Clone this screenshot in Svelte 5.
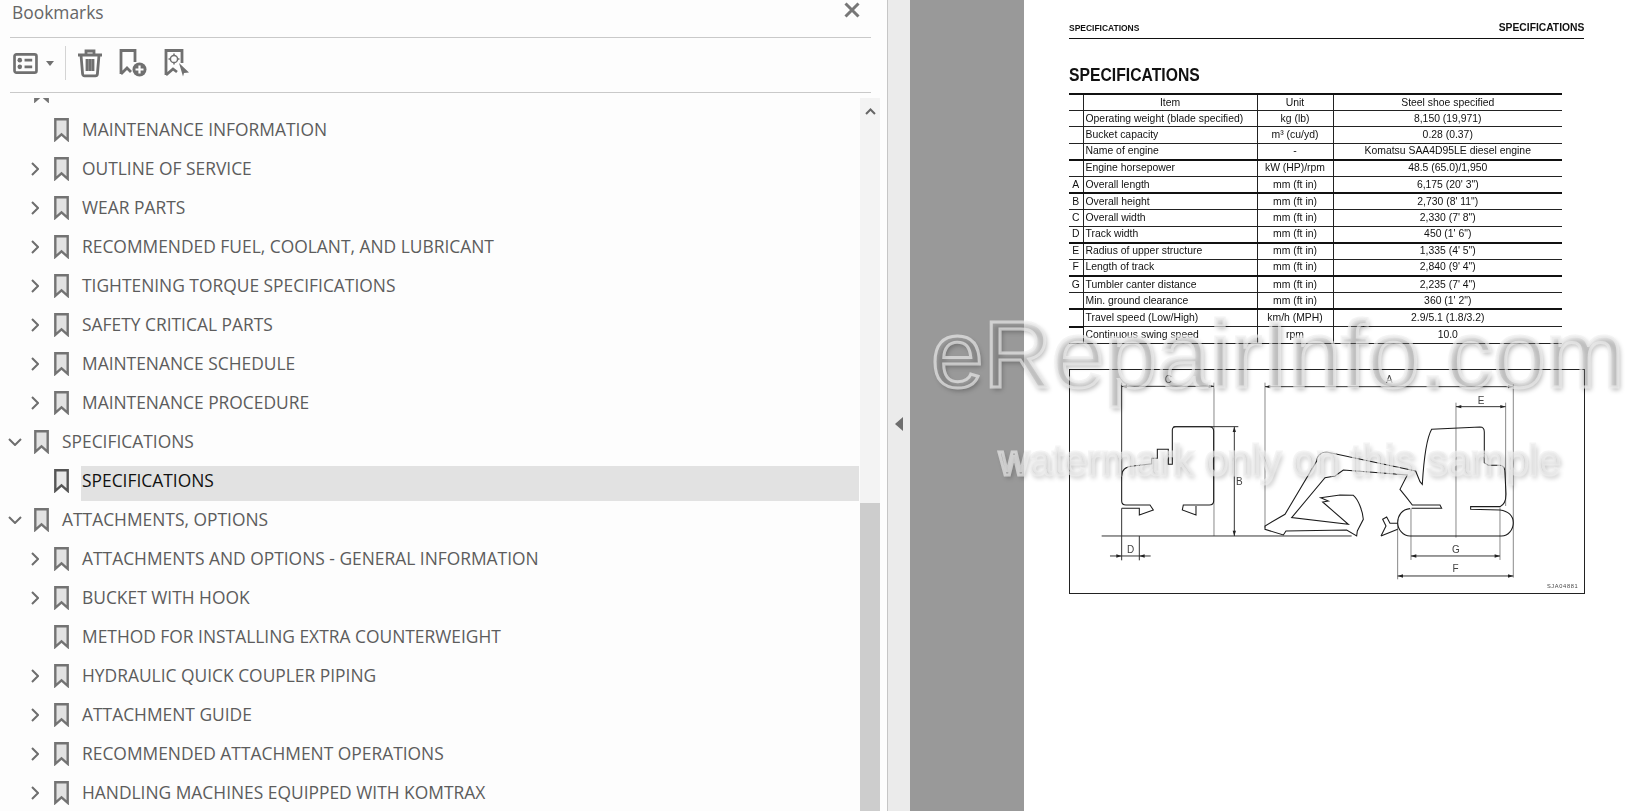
<script>
  // bookmark tree rows, level 0 = top, 1 = nested
  const rows = [
    { label: '', level: 0, hidden: true },
    { label: 'MAINTENANCE INFORMATION', level: 1 },
    { label: 'OUTLINE OF SERVICE', level: 1, arrow: 'right' },
    { label: 'WEAR PARTS', level: 1, arrow: 'right' },
    { label: 'RECOMMENDED FUEL, COOLANT, AND LUBRICANT', level: 1, arrow: 'right' },
    { label: 'TIGHTENING TORQUE SPECIFICATIONS', level: 1, arrow: 'right' },
    { label: 'SAFETY CRITICAL PARTS', level: 1, arrow: 'right' },
    { label: 'MAINTENANCE SCHEDULE', level: 1, arrow: 'right' },
    { label: 'MAINTENANCE PROCEDURE', level: 1, arrow: 'right' },
    { label: 'SPECIFICATIONS', level: 0, arrow: 'down' },
    { label: 'SPECIFICATIONS', level: 1, selected: true },
    { label: 'ATTACHMENTS, OPTIONS', level: 0, arrow: 'down' },
    { label: 'ATTACHMENTS AND OPTIONS - GENERAL INFORMATION', level: 1, arrow: 'right' },
    { label: 'BUCKET WITH HOOK', level: 1, arrow: 'right' },
    { label: 'METHOD FOR INSTALLING EXTRA COUNTERWEIGHT', level: 1 },
    { label: 'HYDRAULIC QUICK COUPLER PIPING', level: 1, arrow: 'right' },
    { label: 'ATTACHMENT GUIDE', level: 1, arrow: 'right' },
    { label: 'RECOMMENDED ATTACHMENT OPERATIONS', level: 1, arrow: 'right' },
    { label: 'HANDLING MACHINES EQUIPPED WITH KOMTRAX', level: 1, arrow: 'right' }
  ];

  const specs = [
    ['', 'Operating weight (blade specified)', 'kg (lb)', '8,150 (19,971)'],
    ['', 'Bucket capacity', 'm³ (cu/yd)', '0.28 (0.37)'],
    ['', 'Name of engine', '-', 'Komatsu SAA4D95LE diesel engine', true],
    ['', 'Engine horsepower', 'kW (HP)/rpm', '48.5 (65.0)/1,950'],
    ['A', 'Overall length', 'mm (ft in)', '6,175 (20\' 3")', true],
    ['B', 'Overall height', 'mm (ft in)', '2,730 (8\' 11")'],
    ['C', 'Overall width', 'mm (ft in)', '2,330 (7\' 8")'],
    ['D', 'Track width', 'mm (ft in)', '450 (1\' 6")', true],
    ['E', 'Radius of upper structure', 'mm (ft in)', '1,335 (4\' 5")'],
    ['F', 'Length of track', 'mm (ft in)', '2,840 (9\' 4")', true],
    ['G', 'Tumbler canter distance', 'mm (ft in)', '2,235 (7\' 4")'],
    ['', 'Min. ground clearance', 'mm (ft in)', '360 (1\' 2")', true],
    ['', 'Travel speed (Low/High)', 'km/h (MPH)', '2.9/5.1 (1.8/3.2)'],
    ['', 'Continuous swing speed', 'rpm', '10.0']
  ];
</script>

<div class="app">
  <aside class="panel">
    <header class="title">
      <span>Bookmarks</span>
      <svg class="close" viewBox="0 0 16 16"><path d="M1.5 1.5l13 13M14.5 1.5l-13 13" /></svg>
    </header>
    <div class="toolbar">
      <svg class="ic-list" viewBox="0 0 26 22">
        <rect x="1.5" y="1.5" width="23" height="19" rx="2" class="line" />
        <circle cx="7" cy="7.5" r="2.4" class="solid" />
        <circle cx="7" cy="14.5" r="2.4" class="solid" />
        <path d="M12 7.5h8M12 14.5h8" class="line" />
      </svg>
      <svg class="ic-caret" viewBox="0 0 8 5"><path d="M0 0h8L4 5z" class="solid" /></svg>
      <span class="divider"></span>
      <svg class="ic-trash" viewBox="0 0 26 28">
        <path d="M1 6h24M9 5V2h8v3M4 6l1.600 19a2 2 0 0 0 2 1.800h10.800a2 2 0 0 0 2-1.800L22 6M10 10v12M13 10v12M16 10v12" class="line" />
      </svg>
      <svg class="ic-add" viewBox="0 0 28 28">
        <path d="M2 25V1.500h14V13M2 25l6-6 4 4" class="line" />
        <circle cx="20.5" cy="20.5" r="7" class="solid" />
        <path d="M20.500 16.500v8M16.500 20.500h8" class="plus" />
      </svg>
      <svg class="ic-target" viewBox="0 0 26 28">
        <path d="M2 26V1.500h16V14M2 26l7-6 4 3" class="line" />
        <circle cx="10" cy="10" r="3.600" class="thin" />
        <path d="M10 4.500v2M10 13.500v2M4.500 10h2M13.500 10h2" class="thin" />
        <path d="M15 14l10 9.500-5 .5-1 3.500z" class="solid" />
      </svg>
    </div>

    <div class="tree">
      <ul class="rows">
        {#each rows as r}
          <li class="row" class:nested={r.level === 1} class:selected={r.selected}>
            <span class="arrow">
              {#if r.arrow === 'right'}
                <svg width="8" height="14" viewBox="0 0 8 14"><path d="M1 1l6 6-6 6" /></svg>
              {:else if r.arrow === 'down'}
                <svg width="14" height="8" viewBox="0 0 14 8"><path d="M1 1l6 6 6-6" /></svg>
              {/if}
            </span>
            <svg class="mark" viewBox="0 0 15 24"><path d="M1.300 1.300h12.400v20.500L7.500 16.300 1.300 21.800z" /></svg>
            {#if !r.hidden}<span class="label">{r.label}</span>{/if}
          </li>
        {/each}
      </ul>
      <div class="scrollbar">
        <svg class="up" width="11" height="7" viewBox="0 0 11 7"><path d="M1 6l4.500-4.500L10 6" /></svg>
        <div class="thumb"></div>
      </div>
    </div>
  </aside>

  <div class="strip">
    <svg width="8" height="14" viewBox="0 0 8 14"><path d="M8 0v14L0 7z" /></svg>
  </div>

  <main class="viewer">
    <div class="gutter"></div>
    <article class="page">
      <div class="page-head">
        <span class="h-left">SPECIFICATIONS</span>
        <span class="h-right">SPECIFICATIONS</span>
      </div>
      <h1>SPECIFICATIONS</h1>
      <table>
        <colgroup><col class="c1" /><col class="c2" /><col class="c3" /><col /></colgroup>
        <thead>
          <tr><th></th><th>Item</th><th>Unit</th><th>Steel shoe specified</th></tr>
        </thead>
        <tbody>
          {#each specs as s, i}
            <tr class:thick={s[4]} class:stub={i === 12}>
              <td class="key">{s[0]}</td>
              <td class="name">{s[1]}</td>
              <td>{s[2]}</td>
              <td>{s[3]}</td>
            </tr>
          {/each}
        </tbody>
      </table>

      <svg class="diagram" viewBox="0 0 516 225">
        <rect x=".5" y=".5" width="515" height="224" class="frame" />
        <!-- front view, coordinates from the 3x crop -->
        <g transform="translate(-19,-8) scale(.3333)">
          <path class="grey" d="M492 65V525" />
          <path class="dim" d="M215 65V345M215 442V598M215 76H492M553 197V525M180 585H302M268 525V598M155 525H905" />
          <path class="dim" d="M370 197H565" />
          <path class="draw" d="M215 420V345C215 325 230 316 250 315L305 308V292H322V265H355V310H367V207C367 200 372 197 378 197H478C487 197 491 203 491 210V420C491 428 486 432 478 432H400L397 447 438 462V435M215 420C215 428 220 432 228 432H300L310 447 268 462V442H215" />
          <text x="355" y="66">C</text>
          <text x="568" y="372">B</text>
          <text x="242" y="575">D</text>
          <path class="tip" d="M215 76l16-5v10zM492 76l-16-5v10zM553 197l-5 16h10zM553 525l-5-16h10zM215 585l-16-5v10zM268 585l16-5v10z" />
        </g>
        <!-- side view -->
        <g transform="translate(181,-8) scale(.3333)">
          <path class="grey" d="M45 65V500M790 70V650M618 125V530M767 125V435M483 442V597M750 440V597M443 485V655" />
          <path class="dim" d="M45 77H790M618 137H767M483 585H750M443 645H790" />
          <path class="draw" d="M497 330L230 273C212 273 200 285 200 300L105 460 45 495V505L100 522 108 510 290 507 320 525 322 510 340 475C338 450 325 415 310 403L270 402 212 410 235 420 218 423 295 490 125 470 225 350 255 345 280 327 472 342 450 385 470 410 487 432H570L575 442H485" />
          <path class="draw" d="M497 330L510 362 517 370C520 320 525 240 545 205L690 198C700 198 703 205 703 213V305L715 313H750C762 314 765 325 765 335L768 400C768 420 762 432 750 437H662V445L750 447C775 450 790 465 790 485 790 505 775 525 755 525H480C460 525 443 505 443 485 443 465 455 445 480 443" />
          <path class="draw" d="M393 525L408 495 398 475 410 468 420 487H443M393 525L443 505" />
          <text x="418" y="66">A</text>
          <text x="693" y="128">E</text>
          <text x="618" y="576">G</text>
          <text x="617" y="633">F</text>
          <text x="938" y="681" class="code">SJA04881</text>
          <path class="tip" d="M45 77l16-5v10zM790 77l-16-5v10zM618 137l16-5v10zM767 137l-16-5v10zM483 585l16-5v10zM750 585l-16-5v10zM443 645l16-5v10zM790 645l-16-5v10z" />
        </g>
      </svg>
    </article>

    <div class="wm wm-site">eRepairInfo.com</div>
    <div class="wm wm-note">watermark only on this sample</div>
  </main>
</div>

<style>
  :global(body) {
    margin: 0;
    overflow: hidden;
  }
  .app {
    display: flex;
    width: 1632px;
    height: 811px;
    overflow: hidden;
    font-family: "Open Sans", "Noto Sans", sans-serif;
  }

  /* left bookmarks panel */
  .panel {
    width: 887px;
    flex: none;
    display: flex;
    flex-direction: column;
    background: #fdfdfd;
    color: #555;
  }
  .title {
    height: 37px;
    margin: 0 16px 0 10px;
    padding: 0 2px;
    display: flex;
    justify-content: space-between;
    border-bottom: 1px solid #c9c9c9;
    font-size: 17.400px;
    line-height: 24px;
    color: #666;
  }
  .close {
    width: 16px;
    height: 16px;
    margin: 2px 9px 0 0;
    fill: none;
    stroke: #777;
    stroke-width: 3;
  }
  .toolbar {
    height: 50px;
    margin: 0 16px 0 10px;
    padding: 0 0 4px 3px;
    display: flex;
    align-items: center;
    border-bottom: 1px solid #c9c9c9;
  }
  .toolbar svg {
    flex: none;
    overflow: visible;
  }
  .line {
    fill: none;
    stroke: #707070;
    stroke-width: 2.800;
  }
  .thin {
    fill: none;
    stroke: #707070;
    stroke-width: 1.500;
  }
  .solid {
    fill: #707070;
  }
  .plus {
    fill: none;
    stroke: #fff;
    stroke-width: 2.200;
  }
  .ic-list { width: 25px; height: 21px; }
  .ic-caret { width: 8px; height: 5px; margin-left: 8px; }
  .divider { width: 1px; height: 34px; background: #d4d4d4; margin: 0 11px 0 11px; }
  .ic-trash { width: 26px; height: 28px; }
  .ic-add { width: 28px; height: 28px; margin-left: 16px; }
  .ic-target { width: 26px; height: 28px; margin-left: 17px; }

  .tree {
    flex: 1;
    min-height: 0;
    margin-top: 5px;
    display: flex;
    overflow: hidden;
  }
  .rows {
    width: 860px;
    flex: none;
    list-style: none;
    margin: -27px 0 0;
    padding: 0;
  }
  .row {
    height: 39px;
    display: flex;
    align-items: center;
    font-size: 17.400px;
    color: #5c5c5c;
    white-space: nowrap;
  }
  .arrow {
    width: 33px;
    flex: none;
    display: flex;
    justify-content: center;
    box-sizing: border-box;
    padding-right: 3px;
  }
  .arrow svg {
    fill: none;
    stroke: #6e6e6e;
    stroke-width: 2;
  }
  .row.nested .arrow {
    width: 53px;
    padding: 0 0 0 31px;
    justify-content: flex-start;
  }
  .mark {
    width: 15px;
    height: 24px;
    flex: none;
    margin-left: 1px;
    fill: #e2e2e2;
    stroke: #737373;
    stroke-width: 2.400;
  }
  .label {
    margin-left: 12px;
    flex: 1;
    padding-left: 1px;
    line-height: 35px;
  }
  .row.selected .label {
    align-self: flex-end;
    height: 35px;
    line-height: 29px;
    margin-right: 1px;
    margin-bottom: -1px;
    background: #e2e2e2;
    color: #111;
  }
  .row.selected .mark {
    stroke: #555;
    fill: #e8e8e8;
  }
  .scrollbar {
    width: 20px;
    flex: none;
    display: flex;
    flex-direction: column;
    align-items: center;
    background: #f3f3f3;
  }
  .up {
    margin-top: 10px;
    fill: none;
    stroke: #666;
    stroke-width: 2;
  }
  .thumb {
    width: 100%;
    height: 310px;
    margin-top: 388px;
    background: #cdcdcd;
  }

  .strip {
    width: 22px;
    flex: none;
    border-left: 1px solid #c6c6c6;
    background: #ebebeb;
    display: flex;
    justify-content: center;
    padding-top: 417px;
    box-sizing: content-box;
  }
  .strip svg {
    fill: #6e6e6e;
  }

  /* right document view */
  .viewer {
    flex: 1;
    position: relative;
    display: flex;
    overflow: hidden;
  }
  .gutter {
    width: 114px;
    flex: none;
    background: #999;
  }
  .page {
    flex: 1;
    background: #fff;
    padding: 20px 0 0 45px;
    color: #111;
    font-family: "Liberation Sans", Arial, sans-serif;
    filter: blur(.35px);
  }
  .page-head {
    width: 515px;
    height: 18px;
    display: flex;
    justify-content: space-between;
    align-items: flex-start;
    border-bottom: 1px solid #111;
    font-weight: 700;
  }
  .h-left {
    font-size: 9px;
    line-height: 16px;
    transform: scaleX(.94);
    transform-origin: left;
  }
  .h-right {
    font-size: 10.500px;
    line-height: 15px;
    transform: scaleX(.98);
    transform-origin: right;
  }
  h1 {
    margin: 26px 0 0;
    font-size: 18.500px;
    line-height: 20px;
    font-weight: 700;
    transform: scaleX(.85);
    transform-origin: left;
  }
  table {
    width: 493px;
    margin-top: 8px;
    table-layout: fixed;
    border-collapse: collapse;
    border-top: 2px solid #111;
    font-size: 10.400px;
  }
  .c1 { width: 14px; }
  .c2 { width: 174px; }
  .c3 { width: 76px; }
  th, td {
    height: 15.200px;
    padding: 0;
    font-weight: 400;
    text-align: center;
    line-height: 14px;
    border-bottom: 1px solid #222;
    border-right: 1px solid #222;
    overflow: hidden;
    white-space: nowrap;
  }
  th:last-child, td:last-child {
    border-right: 0;
  }
  td.name {
    text-align: left;
    padding-left: 2px;
  }
  tr.thick td {
    border-bottom: 2px solid #111;
  }
  tr.stub td.key {
    border-bottom: 2px solid #111;
  }
  .diagram {
    display: block;
    width: 516px;
    height: 225px;
    margin-top: 25px;
    overflow: visible;
  }
  .frame {
    fill: none;
    stroke: #222;
  }
  .grey, .dim, .draw {
    fill: none;
    stroke-width: 3;
  }
  .grey { stroke: #8a8a8a; }
  .dim { stroke: #333; }
  .draw { stroke: #1c1c1c; stroke-width: 3.200; }
  .tip { fill: #222; }
  .diagram text {
    font-size: 30px;
    fill: #444;
    text-anchor: middle;
  }
  .diagram text.code {
    font-size: 17px;
    letter-spacing: 2px;
  }

  /* stamped watermark: see-through letters with a pale edge and soft shadow */
  .wm {
    position: absolute;
    white-space: nowrap;
    font-family: "Liberation Sans", Arial, sans-serif;
    color: rgba(190, 190, 190, .25);
    -webkit-text-stroke: 3px rgba(238, 238, 238, .65);
    pointer-events: none;
    text-shadow: 2px 3px 5px rgba(0, 0, 0, .28);
    filter: blur(.7px);
  }
  .wm-site {
    left: 21px;
    top: 299px;
    font-size: 94.500px;
    line-height: 110px;
  }
  .wm-note {
    left: 89px;
    top: 436px;
    font-size: 41.600px;
    line-height: 50px;
  }
</style>
